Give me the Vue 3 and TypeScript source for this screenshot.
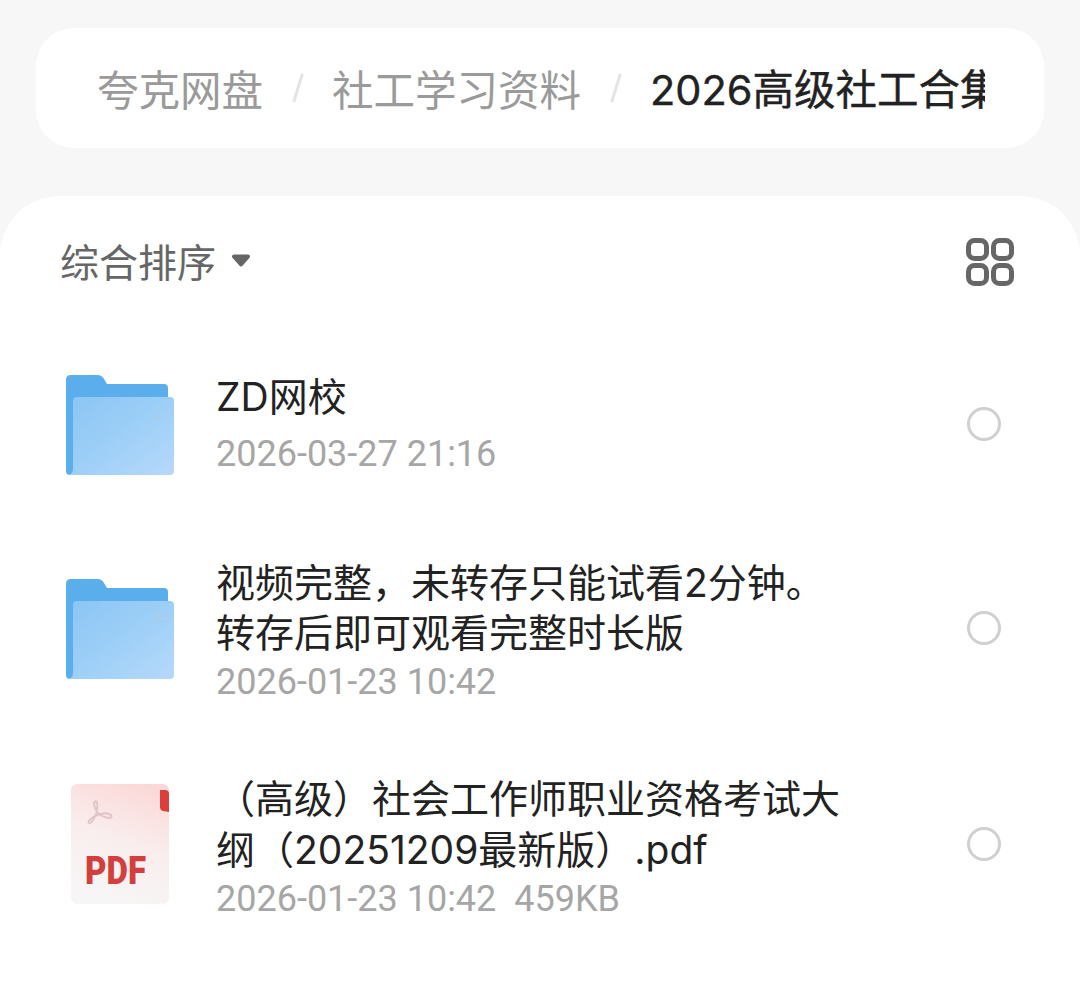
<script setup lang="ts">
interface FileRow {
  id: number
  kind: 'folder' | 'pdf'
  lines: string[]
  meta: string
}

const crumbs = ['夸克网盘', '社工学习资料']
const current = '2026高级社工合集'

const rows: FileRow[] = [
  { id: 1, kind: 'folder', lines: ['ZD网校'], meta: '2026-03-27 21:16' },
  {
    id: 2,
    kind: 'folder',
    lines: ['视频完整，未转存只能试看2分钟。', '转存后即可观看完整时长版'],
    meta: '2026-01-23 10:42',
  },
  {
    id: 3,
    kind: 'pdf',
    lines: ['（高级）社会工作师职业资格考试大', '纲（20251209最新版）.pdf'],
    meta: '2026-01-23 10:42\u00a0\u00a0459KB',
  },
]
</script>

<template>
  <div class="page">
    <nav class="crumbs">
      <div class="crumbs__track">
        <template v-for="c in crumbs" :key="c">
          <span class="crumbs__item">{{ c }}</span>
          <svg class="crumbs__sep" width="12" height="30" viewBox="0 0 12 30">
            <path d="M10 2 L2 28" stroke="#e4e4e4" stroke-width="3" stroke-linecap="round" />
          </svg>
        </template>
        <span class="crumbs__current">{{ current }}</span>
      </div>
    </nav>

    <main class="sheet">
      <header class="toolbar">
        <div class="sort">
          <span>综合排序</span>
          <svg width="20" height="13" viewBox="0 0 20 13">
            <path d="M3 2.5 H17 L10 10.5 Z" fill="#666" stroke="#666" stroke-width="4" stroke-linejoin="round" />
          </svg>
        </div>
        <svg class="grid-icon" width="48" height="48" viewBox="0 0 48 48" fill="none" stroke="#666" stroke-width="5">
          <rect x="2.5" y="2.5" width="18" height="18" rx="6" />
          <rect x="27.5" y="2.5" width="18" height="18" rx="6" />
          <rect x="2.5" y="27.5" width="18" height="18" rx="6" />
          <rect x="27.5" y="27.5" width="18" height="18" rx="6" />
        </svg>
      </header>

      <ul class="list">
        <li v-for="row in rows" :key="row.id" class="row" :class="`row--${row.id}`">
          <div class="row__icon">
            <svg v-if="row.kind === 'folder'" class="folder" width="108" height="100" viewBox="0 0 108 100">
              <defs>
                <linearGradient :id="`front-${row.id}`" x1="0" y1="0" x2="1" y2="1">
                  <stop offset="0" stop-color="#8ac5f4" />
                  <stop offset="0.5" stop-color="#9dcff7" />
                  <stop offset="1" stop-color="#b6d9fb" />
                </linearGradient>
              </defs>
              <path
                d="M0 5 Q0 0 5 0 H31 Q36 0 38 4 L41 9 H98 Q102 9 102 13 V40 H7 V100 H4 Q0 100 0 96 Z"
                fill="#5aaeec"
              />
              <path d="M7 26 Q7 22 11 22 H104 Q108 22 108 26 V96 Q108 100 104 100 H0 Q7 100 7 94 Z" :fill="`url(#front-${row.id})`" />
              <rect x="87" y="34" width="13" height="2.5" fill="#a5cdee" />
              <rect x="87" y="41" width="13" height="2.5" fill="#a5cdee" />
            </svg>
            <svg v-else class="pdf" width="100" height="122" viewBox="0 0 100 122">
              <defs>
                <linearGradient id="pdf-bg" x1="0.7" y1="0" x2="0.4" y2="1">
                  <stop offset="0" stop-color="#fbd9d8" />
                  <stop offset="0.5" stop-color="#f9eeee" />
                  <stop offset="1" stop-color="#f7f6f6" />
                </linearGradient>
              </defs>
              <rect x="1" y="1" width="98" height="120" rx="6" fill="url(#pdf-bg)" />
              <path d="M90 7 H95 Q99 7 99 11 V29 L93 28 Q90 27 90 24 Z" fill="#dc3e3c" />
              <path
                d="M26 18 Q23 18 25 25 Q28 33 38 35 Q43 35 41 32 Q36 28 25 33 Q17 38 19 40 Q22 41 26 31 Q29 21 26 18 Z"
                fill="none"
                stroke="#e0c4c8"
                stroke-width="2"
              />
              <text x="15" y="101" class="pdf__label" textLength="61" lengthAdjust="spacingAndGlyphs">PDF</text>
            </svg>
          </div>
          <div class="row__body">
            <div class="row__title">
              <div v-for="line in row.lines" :key="line">{{ line }}</div>
            </div>
            <div class="row__meta">{{ row.meta }}</div>
          </div>
          <span class="radio" />
        </li>
      </ul>
    </main>
  </div>
</template>

<style scoped>
.page {
  width: 1080px;
  height: 1000px;
  overflow: hidden;
  box-sizing: border-box;
  padding-top: 28px;
  background: #f7f7f7;
  font-family: "Noto Sans CJK SC", "Noto Sans", sans-serif;
}

.crumbs {
  height: 120px;
  margin: 0 36px 48px;
  padding: 0 59px 0 61px;
  box-sizing: border-box;
  display: flex;
  align-items: center;
  background: #fff;
  border-radius: 38px;
}

.crumbs__track {
  flex: 1;
  display: flex;
  align-items: center;
  gap: 28.5px;
  overflow: hidden;
  white-space: nowrap;
  font-size: 41.5px;
  line-height: 64px;
}

.crumbs__item {
  color: #9a9a9a;
  flex: none;
}

.crumbs__sep {
  flex: none;
}

.crumbs__current {
  color: #222;
  flex: none;
  margin-top: 4px;
  font-family: "Inter", "Noto Sans CJK SC", sans-serif;
  -webkit-text-stroke: 0.4px #222;
}

.sheet {
  height: 804px;
  background: #fff;
  border-radius: 60px 60px 0 0;
}

.toolbar {
  height: 132px;
  padding: 0 66px 0 60px;
  display: flex;
  align-items: center;
  justify-content: space-between;
}

.sort {
  display: flex;
  align-items: center;
  gap: 15px;
  margin-top: -4px;
  color: #666;
  font-size: 39px;
  line-height: 56px;
}

.grid-icon {
  flex: none;
}

.list {
  list-style: none;
  margin: -6px 0 0;
  padding: 0;
}

.row {
  height: 204px;
  display: flex;
  align-items: center;
  padding: 0 79px 0 66px;
}

.row--3 {
  height: 228px;
}

.row__icon {
  width: 108px;
  flex: none;
  display: flex;
  align-items: center;
}

.folder {
  margin-top: 2px;
}

.pdf {
  margin-left: 4px;
}

.pdf__label {
  font-family: "Roboto", sans-serif;
  font-weight: 900;
  font-size: 38px;
  fill: #d2403e;
}

.row__body {
  flex: 1;
  margin-left: 42px;
  padding-top: 8px;
}

.row--1 .row__body {
  padding-top: 2px;
}

.row__title {
  color: #222;
  font-family: "Inter", "Noto Sans CJK SC", sans-serif;
  font-size: 39px;
  line-height: 50px;
}

.row--1 .row__title {
  margin-bottom: 8px;
}

.row--3 .row__title {
  line-height: 51px;
}

.row__meta {
  color: #a6a6a6;
  font-family: "Roboto", "Noto Sans CJK SC", sans-serif;
  font-size: 36px;
  line-height: 48px;
}

.radio {
  width: 34px;
  height: 34px;
  box-sizing: border-box;
  flex: none;
  border: 3px solid #d0d0d0;
  border-radius: 50%;
}
</style>

<style>
html,
body {
  margin: 0;
  background: #f7f7f7;
}
</style>
